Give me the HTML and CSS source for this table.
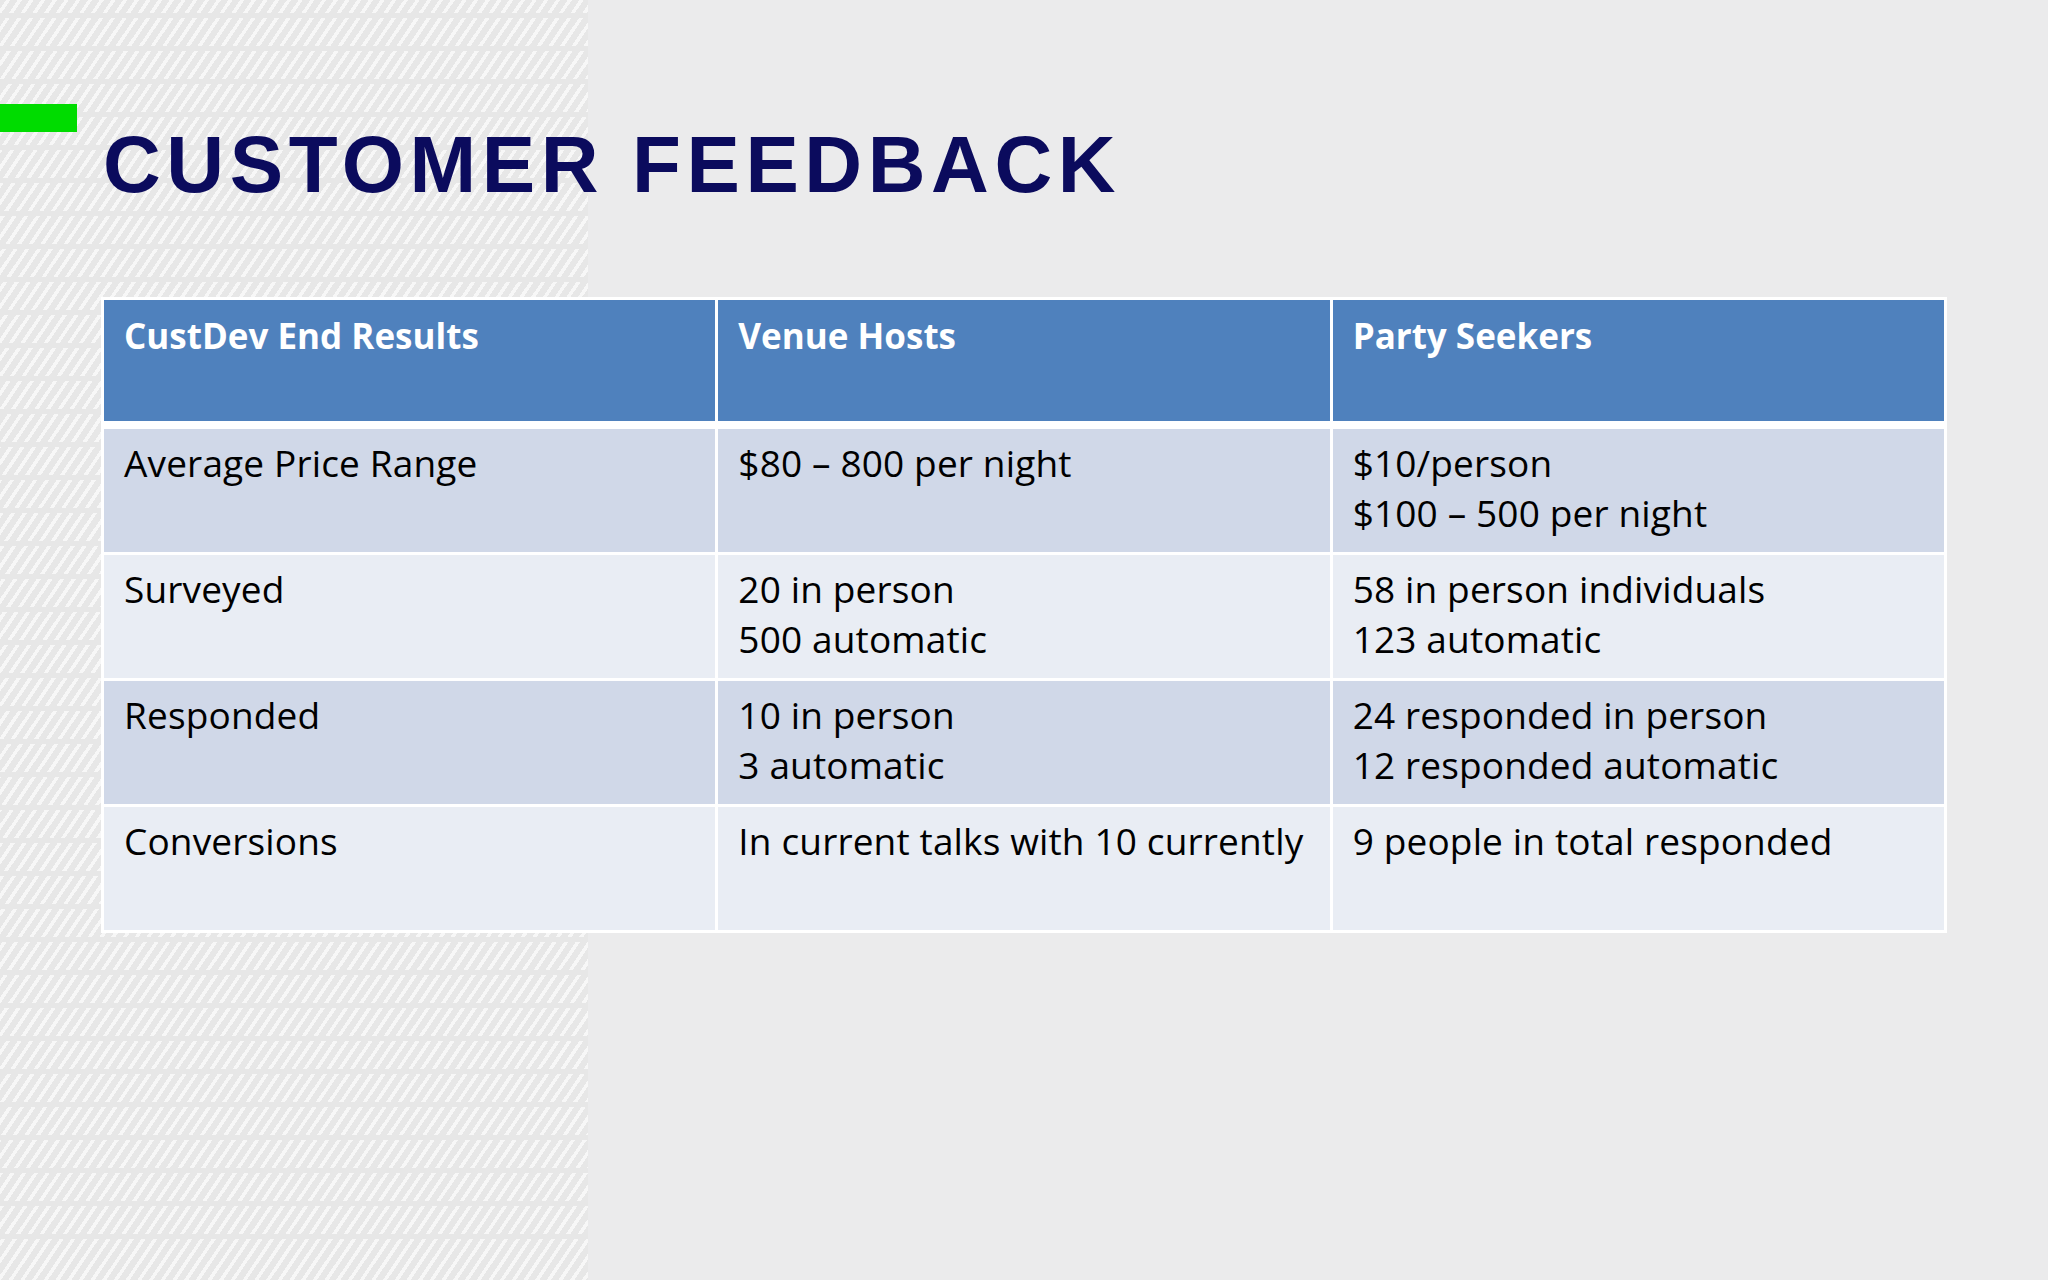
FILE: index.html
```html
<!DOCTYPE html>
<html lang="en">
<head>
<meta charset="utf-8">
<title>Customer Feedback</title>
<link rel="stylesheet" href="styles.css">
</head>
<body>
<div class="slide">
  <div class="head">
    <div class="accent"></div>
    <h1 class="title">CUSTOMER FEEDBACK</h1>
  </div>
  <div class="table">
    <div class="cell hd">CustDev End Results</div>
    <div class="cell hd">Venue Hosts</div>
    <div class="cell hd">Party Seekers</div>

    <div class="cell odd">Average Price Range</div>
    <div class="cell odd">$80 – 800 per night</div>
    <div class="cell odd"><div>$10/person</div><div>$100 – 500 per night</div></div>

    <div class="cell even">Surveyed</div>
    <div class="cell even"><div>20 in person</div><div>500 automatic</div></div>
    <div class="cell even"><div>58 in person individuals</div><div>123 automatic</div></div>

    <div class="cell odd">Responded</div>
    <div class="cell odd"><div>10 in person</div><div>3 automatic</div></div>
    <div class="cell odd"><div>24 responded in person</div><div>12 responded automatic</div></div>

    <div class="cell even">Conversions</div>
    <div class="cell even">In current talks with 10 currently</div>
    <div class="cell even">9 people in total responded</div>
  </div>
</div>
</body>
</html>
```

FILE: styles.css
```css
html, body {
  margin: 0;
  padding: 0;
}

.slide {
  width: 2048px;
  height: 1280px;
  box-sizing: border-box;
  padding-top: 104px;
  overflow: hidden;
  background-color: #ebebec;
  background-image:
    repeating-linear-gradient(180deg, transparent 0 28px, #e7e7e7 28px 33px),
    repeating-linear-gradient(124deg, #e7e7e7 0 5px, #f7f7f7 5px 8.5px, #e7e7e7 8.5px 9.7px);
  background-size: 588px 100%, 588px 100%;
  background-position: 0 -15px, 0 0;
  background-repeat: no-repeat;
  font-family: "Open Sans", "Noto Sans", sans-serif;
}

.head {
  display: flex;
  align-items: flex-start;
}

.accent {
  flex: none;
  width: 77px;
  height: 28px;
  background: #00dc00;
}

.title {
  margin: 21px 0 0 26px;
  font-family: "Liberation Sans", Arial, sans-serif;
  font-weight: 700;
  font-size: 80px;
  line-height: 80px;
  letter-spacing: 5.6px;
  color: #0b0b5d;
}

.table {
  margin: 92px 0 0 101px;
  width: 1846px;
  box-sizing: border-box;
  display: grid;
  grid-template-columns: repeat(3, 1fr);
  grid-template-rows: 126px repeat(4, 123px);
  gap: 3px;
  padding: 3px;
  background: #ffffff;
}

.cell {
  padding: 9px 20px;
  font-size: 37px;
  line-height: 50px;
  letter-spacing: 0.15px;
  color: #000000;
  white-space: nowrap;
}

.hd {
  margin-bottom: 5px;
  padding-top: 11px;
  background: #4f81bd;
  color: #ffffff;
  font-weight: 700;
  font-size: 35px;
  letter-spacing: 0;
}

.odd {
  background: #d0d8e8;
}

.even {
  background: #e9edf4;
}
```
